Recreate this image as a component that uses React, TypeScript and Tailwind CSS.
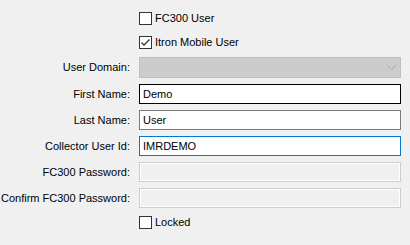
import React from 'react';

function CheckBox({ label, checked }: { label: string; checked?: boolean }) {
  return (
    <div className="flex items-center h-[13px]">
      <span className="w-[13px] h-[13px] border border-[#333333] bg-white flex items-center justify-center shrink-0">
        {checked && (
          <svg width="11" height="11" viewBox="0 0 11 11">
            <polyline points="1.5,5.5 4,8 9.5,2.5" fill="none" stroke="#333333" strokeWidth="1.3" />
          </svg>
        )}
      </span>
      <span className="ml-[3px] leading-none">{label}</span>
    </div>
  );
}

function Row({ label, children }: { label?: string; children: React.ReactNode }) {
  return (
    <div className="flex items-center">
      <div className="w-[130px] text-right whitespace-nowrap leading-none">{label}</div>
      <div className="ml-[9px] w-[262px]">{children}</div>
    </div>
  );
}

function TextBox({ value, state }: { value?: string; state: 'normal' | 'hover' | 'focus' | 'disabled' }) {
  const border = {
    normal: 'border-[#7a7a7a] bg-white',
    hover: 'border-[#000000] bg-white',
    focus: 'border-[#0078d7] bg-white',
    disabled: 'border-[#cccccc] bg-[#f0f0f0] shadow-[inset_0_0_0_1px_#ffffff]',
  }[state];
  return (
    <div className={`h-[20px] border ${border} flex items-center px-[3px] leading-none`}>
      {value}
    </div>
  );
}

export default function App() {
  return (
    <div
      className="min-h-screen bg-[#f0f0f0] text-black text-[11px] pt-[12px]"
      style={{ fontFamily: '"Liberation Sans", Arial, sans-serif' }}
    >
      <div className="flex flex-col">
        <Row>
          <CheckBox label="FC300 User" />
        </Row>
        <div className="mt-[11px]">
          <Row>
            <CheckBox label="Itron Mobile User" checked />
          </Row>
        </div>
        <div className="mt-[8px]">
          <Row label="User Domain:">
            <div className="h-[21px] border border-[#bfbfbf] bg-[#cccccc] flex items-center justify-end pr-[4px]">
              <svg width="9" height="5" viewBox="0 0 9 5">
                <polyline points="0.5,0.5 4.5,4.5 8.5,0.5" fill="none" stroke="#a6a6a6" strokeWidth="1" />
              </svg>
            </div>
          </Row>
        </div>
        <div className="mt-[6px] flex flex-col gap-[6px]">
          <Row label="First Name:">
            <TextBox value="Demo" state="hover" />
          </Row>
          <Row label="Last Name:">
            <TextBox value="User" state="normal" />
          </Row>
          <Row label="Collector User Id:">
            <TextBox value="IMRDEMO" state="focus" />
          </Row>
          <Row label="FC300 Password:">
            <TextBox state="disabled" />
          </Row>
          <Row label="Confirm FC300 Password:">
            <TextBox state="disabled" />
          </Row>
        </div>
        <div className="mt-[8px]">
          <Row>
            <CheckBox label="Locked" />
          </Row>
        </div>
      </div>
    </div>
  );
}
